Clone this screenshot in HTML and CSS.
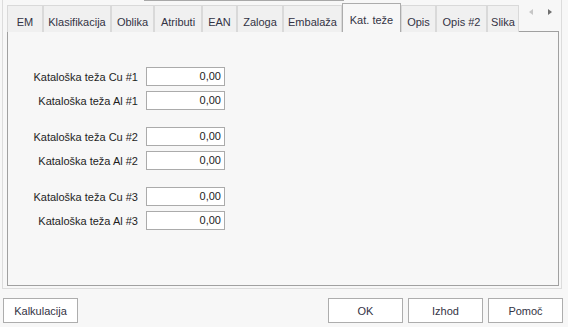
FILE: index.html
```html
<!DOCTYPE html>
<html lang="sl">
<head>
<meta charset="utf-8">
<title>Kat. teže</title>
<link rel="stylesheet" href="styles.css">
</head>
<body>
<div class="frame">
  <div class="topline"></div>
  <div class="tabbar">
    <div class="tabs">
      <div class="tab w-em">EM</div>
      <div class="tab w-klas">Klasifikacija</div>
      <div class="tab w-obl">Oblika</div>
      <div class="tab w-atr">Atributi</div>
      <div class="tab w-ean">EAN</div>
      <div class="tab w-zal">Zaloga</div>
      <div class="tab w-emb">Embalaža</div>
      <div class="tab active w-kat">Kat. teže</div>
      <div class="tab w-opis">Opis</div>
      <div class="tab w-opis2">Opis #2</div>
      <div class="tab w-slika">Slika</div>
    </div>
    <div class="scroll">
      <span class="arrow left"></span>
      <span class="arrow right"></span>
    </div>
  </div>
  <div class="panel">
    <div class="form">
      <div class="group">
        <div class="row"><label class="lbl">Kataloška teža Cu #1</label><div class="field">0,00</div></div>
        <div class="row"><label class="lbl">Kataloška teža Al #1</label><div class="field">0,00</div></div>
      </div>
      <div class="group">
        <div class="row"><label class="lbl">Kataloška teža Cu #2</label><div class="field">0,00</div></div>
        <div class="row"><label class="lbl">Kataloška teža Al #2</label><div class="field">0,00</div></div>
      </div>
      <div class="group">
        <div class="row"><label class="lbl">Kataloška teža Cu #3</label><div class="field">0,00</div></div>
        <div class="row"><label class="lbl">Kataloška teža Al #3</label><div class="field">0,00</div></div>
      </div>
    </div>
  </div>
</div>
<div class="buttons">
  <button class="btn">Kalkulacija</button>
  <div class="spacer"></div>
  <button class="btn">OK</button>
  <button class="btn">Izhod</button>
  <button class="btn">Pomoč</button>
</div>
</body>
</html>
```

FILE: styles.css
```css
* { box-sizing: border-box; }

html, body {
  margin: 0;
  padding: 0;
  background: #f7f7f7;
  font-family: "Liberation Sans", Arial, sans-serif;
  font-size: 11px;
  color: #222;
}

body {
  width: 568px;
  height: 327px;
  overflow: hidden;
}

.frame {
  margin-left: 2px;
  width: 560px;
  height: 289px;
  border-left: 1px solid #dcdcdc;
  border-right: 1px solid #dcdcdc;
  border-bottom: 1px solid #dcdcdc;
  padding: 0 2px 2px 4px;
  display: flex;
  flex-direction: column;
}

.topline {
  margin-left: 137px;
  width: 200px;
  height: 1px;
  background: #a8a8a8;
}

.tabbar {
  margin-top: 3px;
  height: 28px;
  display: flex;
  align-items: flex-end;
  margin-bottom: -1px;
  position: relative;
  z-index: 1;
}

.tabs {
  display: flex;
  align-items: flex-end;
}

.tab {
  height: 27px;
  border: 1px solid #d9d9d9;
  border-bottom: none;
  background: #f0f0f0;
  color: #333344;
  text-align: center;
  padding-top: 10px;
  line-height: 13px;
  white-space: nowrap;
  overflow: hidden;
}

.tab.active {
  height: 29px;
  border-color: #acacac;
  background: #f7f7f7;
}

.w-em { width: 36px; }
.w-klas { width: 68px; }
.w-obl { width: 43px; }
.w-atr { width: 48px; }
.w-ean { width: 35px; }
.w-zal { width: 46px; }
.w-emb { width: 59px; }
.w-kat { width: 59px; }
.w-opis { width: 35px; }
.w-opis2 { width: 51px; }
.w-slika { width: 32px; }

.scroll {
  align-self: flex-start;
  display: flex;
  gap: 15px;
  padding: 5px 0 0 10px;
}

.arrow {
  width: 0;
  height: 0;
  border-top: 3.5px solid transparent;
  border-bottom: 3.5px solid transparent;
}

.arrow.left { border-right: 4px solid #c6c6c6; }
.arrow.right { border-left: 4px solid #707070; }

.panel {
  flex: 1;
  border: 1px solid #a0a0a0;
  background: #f7f7f7;
}

.form {
  padding: 35px 0 0 0;
  display: flex;
  flex-direction: column;
  gap: 17px;
}

.group {
  display: flex;
  flex-direction: column;
  gap: 5px;
}

.row {
  display: flex;
  align-items: center;
  gap: 8px;
}

.lbl {
  width: 130px;
  text-align: right;
  color: #1e1e1e;
  white-space: nowrap;
}

.field {
  width: 79px;
  height: 19px;
  border: 1px solid #ababab;
  background: #fff;
  text-align: right;
  padding-right: 3px;
  line-height: 17px;
  color: #222;
}

.buttons {
  display: flex;
  gap: 5px;
  padding: 0 5px 0 3px;
  margin-top: 9px;
}

.spacer { flex: 1; }

.btn {
  width: 75px;
  height: 25px;
  border: 1px solid #adadad;
  background: #fff;
  font: inherit;
  color: #333344;
  padding: 0;
  border-radius: 0;
}
```
